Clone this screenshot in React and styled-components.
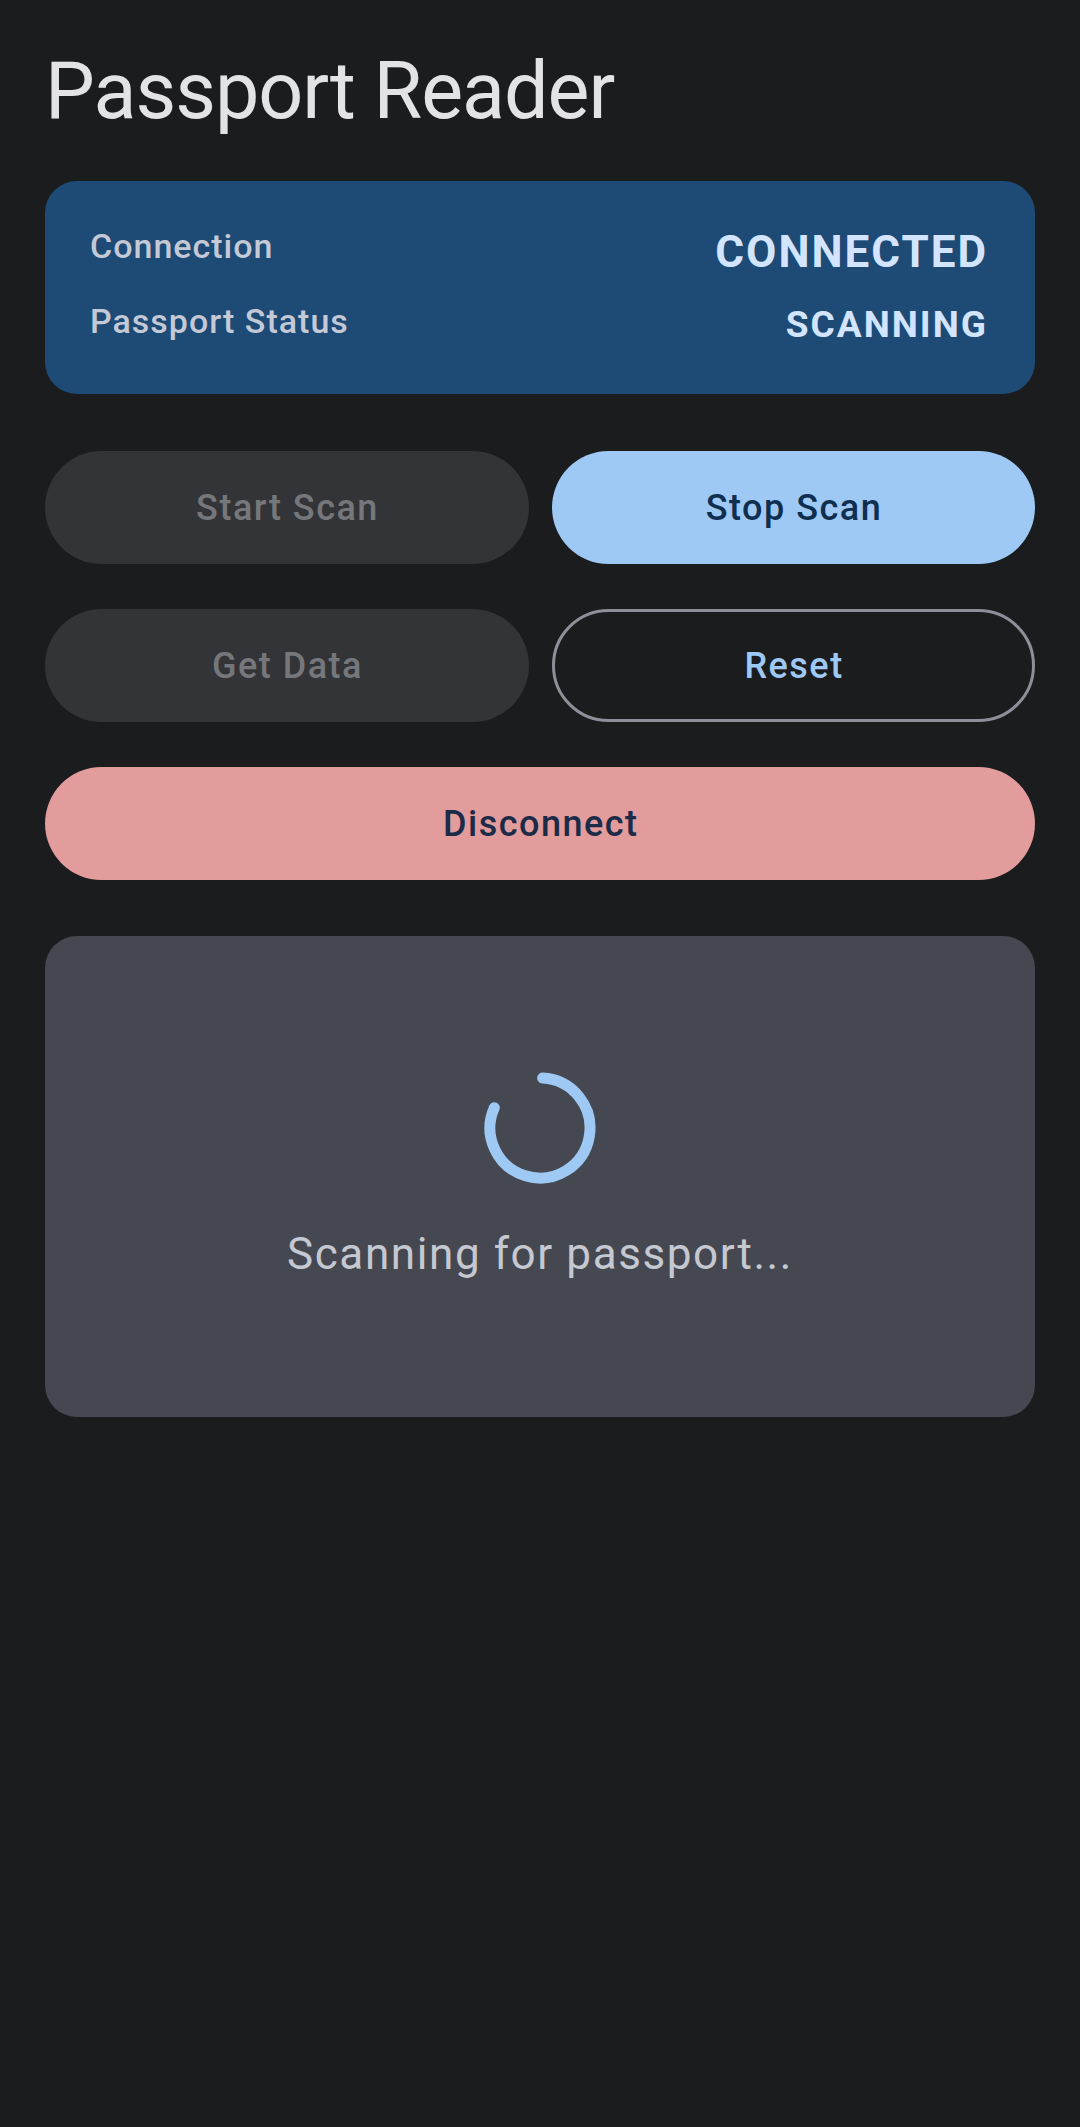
import React from "react";
import styled, { createGlobalStyle } from "styled-components";

const GlobalStyle = createGlobalStyle`
  html, body {
    margin: 0;
    padding: 0;
    background: #1b1c1e;
  }
  body {
    font-family: Roboto, "Noto Sans", "Liberation Sans", sans-serif;
    -webkit-font-smoothing: antialiased;
  }
  #root {
    min-height: 2127px;
    background: #1b1c1e;
  }
`;

const Page = styled.main`
  display: flex;
  flex-direction: column;
  padding: 45px 45px 0;
  box-sizing: border-box;
`;

const Title = styled.h1`
  margin: 0 0 44px;
  font-size: 79px;
  font-weight: 400;
  line-height: normal;
  color: #e3e2e6;
  letter-spacing: -1px;
`;

const StatusCard = styled.section`
  display: flex;
  flex-direction: column;
  gap: 23px;
  padding: 45px 49px 45px 45px;
  background: #1e4a76;
  border-radius: 32px;
`;

const StatusRow = styled.div`
  display: flex;
  justify-content: space-between;
  align-items: flex-start;
`;

const StatusLabel = styled.span`
  font-size: 34px;
  font-weight: 500;
  line-height: 40px;
  letter-spacing: 1px;
  color: #c4c9d6;
`;

const StatusValue = styled.span`
  font-size: ${(p) => p.$size}px;
  line-height: ${(p) => p.$lh}px;
  font-weight: 700;
  letter-spacing: ${(p) => p.$ls}px;
  margin-right: -${(p) => p.$ls}px;
  color: #d3e4ff;
`;

const Controls = styled.div`
  display: flex;
  flex-direction: column;
  gap: 45px;
  margin: 57px 0 56px;
`;

const ButtonRow = styled.div`
  display: grid;
  grid-template-columns: 1fr 1fr;
  gap: 23px;
`;

const variants = {
  disabled: { bg: "#333437", color: "#76777b", border: "transparent" },
  primary: { bg: "#9ec9f4", color: "#0f2f50", border: "transparent" },
  outline: { bg: "transparent", color: "#9ec9f4", border: "#8e9099" },
  danger: { bg: "#e19c9b", color: "#1c2b47", border: "transparent" },
};

const PillButton = styled.button`
  height: 113px;
  border-radius: 57px;
  border: 3px solid ${(p) => variants[p.$variant].border};
  background: ${(p) => variants[p.$variant].bg};
  color: ${(p) => variants[p.$variant].color};
  font-family: Roboto, "Noto Sans", sans-serif;
  font-size: 36px;
  font-weight: 500;
  letter-spacing: 1.5px;
  text-indent: 1.5px;
  display: flex;
  align-items: center;
  justify-content: center;
  padding: 0;
  box-sizing: border-box;
  cursor: ${(p) => (p.$variant === "disabled" ? "default" : "pointer")};
`;

const ScanPanel = styled.section`
  height: 481px;
  box-sizing: border-box;
  padding-top: 136px;
  background: #454850;
  border-radius: 32px;
  display: flex;
  flex-direction: column;
  align-items: center;
  gap: 44px;
`;

const SpinnerSvg = styled.svg`
  width: 112px;
  height: 112px;
  display: block;
  flex-shrink: 0;
`;

const ScanText = styled.p`
  margin: 0;
  font-size: 44px;
  font-weight: 400;
  line-height: normal;
  letter-spacing: 1.6px;
  color: #c6c8d1;
`;

function Spinner() {
  return (
    <SpinnerSvg viewBox="0 0 112 112">
      <path
        d="M 58.6 6.07 A 50 50 0 1 1 10.32 35.66"
        fill="none"
        stroke="#9ec9f4"
        strokeWidth="11"
        strokeLinecap="round"
      />
    </SpinnerSvg>
  );
}

export default function App() {
  return (
    <>
      <GlobalStyle />
      <Page>
        <Title>Passport Reader</Title>
        <StatusCard>
          <StatusRow>
            <StatusLabel>Connection</StatusLabel>
            <StatusValue $size={44} $lh={52} $ls={2}>CONNECTED</StatusValue>
          </StatusRow>
          <StatusRow>
            <StatusLabel>Passport Status</StatusLabel>
            <StatusValue $size={37} $lh={48} $ls={2}>SCANNING</StatusValue>
          </StatusRow>
        </StatusCard>
        <Controls>
          <ButtonRow>
            <PillButton $variant="disabled" disabled>Start Scan</PillButton>
            <PillButton $variant="primary">Stop Scan</PillButton>
          </ButtonRow>
          <ButtonRow>
            <PillButton $variant="disabled" disabled>Get Data</PillButton>
            <PillButton $variant="outline">Reset</PillButton>
          </ButtonRow>
          <PillButton $variant="danger">Disconnect</PillButton>
        </Controls>
        <ScanPanel>
          <Spinner />
          <ScanText>Scanning for passport...</ScanText>
        </ScanPanel>
      </Page>
    </>
  );
}
